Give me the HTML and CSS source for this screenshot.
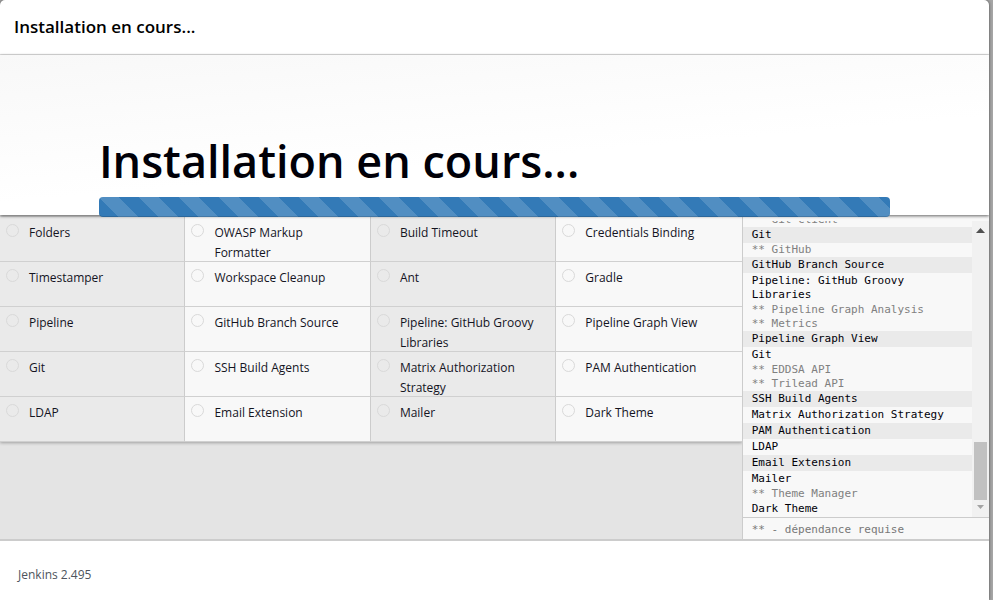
FILE: index.html
```html
<!DOCTYPE html>
<html lang="fr">
<head>
<meta charset="utf-8">
<meta name="viewport" content="width=device-width, initial-scale=1">
<title>Installation en cours...</title>
<link rel="stylesheet" href="styles.css">
</head>
<body>
<div class="dialog">
  <header class="dialog-header"><h2 class="dialog-title">Installation en cours...</h2></header>
  <section class="hero">
    <h1 class="hero-title">Installation en cours...</h1>
    <div class="progress" role="progressbar" aria-label="Installation en cours"></div>
  </section>
  <main class="install">
    <div class="plugins">
      <ul class="plugin-grid">
        <li class="plugin"><span class="status"></span>Folders</li>
        <li class="plugin"><span class="status"></span>OWASP Markup Formatter</li>
        <li class="plugin"><span class="status"></span>Build Timeout</li>
        <li class="plugin"><span class="status"></span>Credentials Binding</li>
        <li class="plugin"><span class="status"></span>Timestamper</li>
        <li class="plugin"><span class="status"></span>Workspace Cleanup</li>
        <li class="plugin"><span class="status"></span>Ant</li>
        <li class="plugin"><span class="status"></span>Gradle</li>
        <li class="plugin"><span class="status"></span>Pipeline</li>
        <li class="plugin"><span class="status"></span>GitHub Branch Source</li>
        <li class="plugin"><span class="status"></span>Pipeline: GitHub Groovy Libraries</li>
        <li class="plugin"><span class="status"></span>Pipeline Graph View</li>
        <li class="plugin"><span class="status"></span>Git</li>
        <li class="plugin"><span class="status"></span>SSH Build Agents</li>
        <li class="plugin"><span class="status"></span>Matrix Authorization Strategy</li>
        <li class="plugin"><span class="status"></span>PAM Authentication</li>
        <li class="plugin"><span class="status"></span>LDAP</li>
        <li class="plugin"><span class="status"></span>Email Extension</li>
        <li class="plugin"><span class="status"></span>Mailer</li>
        <li class="plugin"><span class="status"></span>Dark Theme</li>
      </ul>
    </div>
    <aside class="console">
      <div class="console-view">
        <div class="log">
          <div class="dep">** Git client</div>
          <div class="entry shaded">Git</div>
          <div class="dep">** GitHub</div>
          <div class="entry shaded">GitHub Branch Source</div>
          <div class="entry">Pipeline: GitHub Groovy Libraries</div>
          <div class="dep">** Pipeline Graph Analysis</div>
          <div class="dep">** Metrics</div>
          <div class="entry shaded">Pipeline Graph View</div>
          <div class="entry">Git</div>
          <div class="dep">** EDDSA API</div>
          <div class="dep">** Trilead API</div>
          <div class="entry shaded">SSH Build Agents</div>
          <div class="entry">Matrix Authorization Strategy</div>
          <div class="entry shaded">PAM Authentication</div>
          <div class="entry">LDAP</div>
          <div class="entry shaded">Email Extension</div>
          <div class="entry">Mailer</div>
          <div class="dep">** Theme Manager</div>
          <div class="entry">Dark Theme</div>
        </div>
        <div class="scrollbar" aria-hidden="true">
          <svg class="arrow" viewBox="0 0 17 17"><path d="M4 12h9L8.500 7z" fill="#505050"/></svg>
          <div class="rail"><div class="thumb"></div></div>
          <svg class="arrow" viewBox="0 0 17 17"><path d="M5 5h7L8.500 9z" fill="#a3a3a3"/></svg>
        </div>
      </div>
      <div class="legend">** - dépendance requise</div>
    </aside>
  </main>
  <footer class="dialog-footer">Jenkins 2.495</footer>
</div>
</body>
</html>
```
FILE: styles.css
```css
* { box-sizing: border-box; }

body {
  margin: 0;
  background: #a5a5a5;
  color: #14141f;
  font-family: "Open Sans", "Noto Sans", sans-serif;
  font-size: 12px;
  line-height: 20px;
}

h1, h2, ul { margin: 0; padding: 0; }
ul { list-style: none; }

.dialog {
  display: flex;
  flex-direction: column;
  height: 100vh;
  margin-right: 4px;
  overflow: hidden;
  background: #fff;
  border-radius: 5px 5px 0 0;
  box-shadow: 0 0 3px #444;
}

.dialog-header {
  flex: none;
  padding: 17px 14px;
  border-bottom: 1px solid #e0e0e0;
}

.dialog-title {
  color: #000;
  font-size: 17px;
  font-weight: 600;
  line-height: 20px;
}

.hero {
  position: relative;
  z-index: 1;
  flex: none;
  height: 160px;
  padding: 74px 10% 0;
  background: linear-gradient(175deg, #f8f8f8, #fff 60%);
  box-shadow: 0 1px 3px rgba(0, 0, 0, .6);
}

.hero-title {
  margin-bottom: 4px;
  color: #000008;
  font-size: 45px;
  font-weight: 600;
  line-height: 64px;
  white-space: nowrap;
}

.progress {
  height: 20px;
  border-radius: 4px;
  background: linear-gradient(45deg, rgba(255, 255, 255, .15) 25%, transparent 25%, transparent 50%, rgba(255, 255, 255, .15) 50%, rgba(255, 255, 255, .15) 75%, transparent 75%) 0 0 / 40px 40px #337ab7;
  box-shadow: inset 0 -1px 0 rgba(0, 0, 0, .15);
}

.install {
  display: flex;
  flex: 1;
  min-height: 0;
  border-bottom: 2px solid #ccc;
}

.plugins {
  flex: none;
  width: 75%;
  padding-top: 2px;
  background: #e4e4e4;
}

.plugin-grid {
  display: grid;
  grid-template-columns: repeat(4, 1fr);
  grid-auto-rows: 45px;
  box-shadow: 0 1px 3px rgba(0, 0, 0, .3);
}

.plugin {
  display: flex;
  align-items: flex-start;
  gap: 10px;
  padding: 6px 14px 0 6px;
  background: #f8f8f8;
  border-right: 1px solid #ccc;
  border-bottom: 1px solid #d0d0d0;
}

.plugin:nth-child(odd) { background: #eaeaea; }
.plugin:nth-child(4n) { border-right: 0; }

.status {
  flex: none;
  width: 13px;
  height: 13px;
  margin-top: 1px;
  border: 1px solid #d9d9d9;
  border-radius: 50%;
}

.console {
  display: flex;
  flex: 1;
  flex-direction: column;
  min-width: 0;
  padding-top: 6px;
  background: #f8f8f8;
  border-left: 1px solid #ccc;
  color: #000008;
  font-family: "DejaVu Sans Mono", monospace;
  font-size: 11px;
  line-height: 14px;
}

.console-view {
  display: flex;
  flex: 1;
  min-height: 0;
}

.log {
  display: flex;
  flex: 1;
  flex-direction: column;
  justify-content: flex-end;
  min-width: 0;
  overflow: hidden;
}

.dep, .entry {
  flex: none;
  padding: 0 9px;
}

.dep { color: #808080; }
.entry { padding-top: 1px; padding-bottom: 1px; }
.shaded { background: #eaeaea; }

.scrollbar {
  display: flex;
  flex: none;
  flex-direction: column;
  width: 17px;
  background: #f1f1f1;
}

.arrow { flex: none; width: 17px; height: 17px; }

.rail {
  display: flex;
  flex: 1;
  align-items: flex-end;
  padding: 0 2px;
}

.thumb { width: 100%; height: 22%; background: #c1c1c1; }

.legend {
  flex: none;
  padding: 5px 9px 2px;
  border-top: 1px solid #ccc;
  color: #777;
}

.dialog-footer {
  flex: none;
  padding: 24px 18px 15px;
  color: #4d545d;
}
```
